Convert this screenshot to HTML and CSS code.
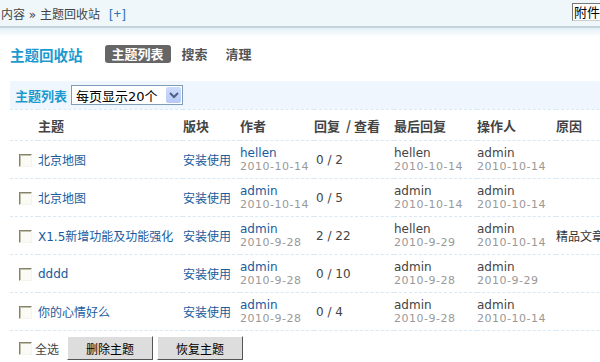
FILE: index.html
```html
<!DOCTYPE html>
<html lang="zh-CN">
<head>
  <meta charset="UTF-8">
  <title>主题回收站</title>
  <link rel="stylesheet" href="styles.css">
</head>
<body>
  <div class="topbar">
    <span class="crumb">内容 &raquo; 主题回收站</span>
    <a class="add" href="#">[+]</a>
    <button class="attach">附件</button>
  </div>
  <div class="shade"></div>

  <div class="titlebar">
    <h2>主题回收站</h2>
    <a class="tab active" href="#">主题列表</a>
    <a class="tab" href="#">搜索</a>
    <a class="tab" href="#">清理</a>
  </div>

  <div class="main">
    <div class="filter">
      <span class="filter-title">主题列表</span>
      <div class="select">
        <span class="select-text">每页显示20个</span>
        <span class="select-arrow">
          <svg width="14" height="14" viewBox="0 0 14 14"><path d="M3 5 L7 9 L11 5" fill="none" stroke="#4d6185" stroke-width="2"/></svg>
        </span>
      </div>
    </div>

    <table class="list">
      <colgroup>
        <col class="c-check"><col class="c-subject"><col class="c-forum"><col class="c-author">
        <col class="c-reply"><col class="c-last"><col class="c-op"><col class="c-reason">
      </colgroup>
      <thead>
        <tr>
          <th></th>
          <th>主题</th>
          <th>版块</th>
          <th>作者</th>
          <th>回复 &nbsp;/ 查看</th>
          <th>最后回复</th>
          <th>操作人</th>
          <th>原因</th>
        </tr>
      </thead>
      <tbody>
        <tr>
          <td><span class="check"></span></td>
          <td><a href="#">北京地图</a></td>
          <td><a href="#">安装使用</a></td>
          <td><a href="#">hellen</a><em>2010-10-14</em></td>
          <td class="num">0 / 2</td>
          <td>hellen<em>2010-10-14</em></td>
          <td>admin<em>2010-10-14</em></td>
          <td></td>
        </tr>
        <tr>
          <td><span class="check"></span></td>
          <td><a href="#">北京地图</a></td>
          <td><a href="#">安装使用</a></td>
          <td><a href="#">admin</a><em>2010-10-14</em></td>
          <td class="num">0 / 5</td>
          <td>admin<em>2010-10-14</em></td>
          <td>admin<em>2010-10-14</em></td>
          <td></td>
        </tr>
        <tr>
          <td><span class="check"></span></td>
          <td><a href="#">X1.5新增功能及功能强化</a></td>
          <td><a href="#">安装使用</a></td>
          <td><a href="#">admin</a><em>2010-9-28</em></td>
          <td class="num">2 / 22</td>
          <td>hellen<em>2010-9-29</em></td>
          <td>admin<em>2010-10-14</em></td>
          <td class="reason">精品文章</td>
        </tr>
        <tr>
          <td><span class="check"></span></td>
          <td><a href="#">dddd</a></td>
          <td><a href="#">安装使用</a></td>
          <td><a href="#">admin</a><em>2010-9-28</em></td>
          <td class="num">0 / 10</td>
          <td>admin<em>2010-9-28</em></td>
          <td>admin<em>2010-9-29</em></td>
          <td></td>
        </tr>
        <tr>
          <td><span class="check"></span></td>
          <td><a href="#">你的心情好么</a></td>
          <td><a href="#">安装使用</a></td>
          <td><a href="#">admin</a><em>2010-9-28</em></td>
          <td class="num">0 / 4</td>
          <td>admin<em>2010-9-28</em></td>
          <td>admin<em>2010-10-14</em></td>
          <td></td>
        </tr>
      </tbody>
    </table>

    <div class="footer">
      <span class="check"></span>
      <span class="all">全选</span>
      <button class="btn">删除主题</button>
      <button class="btn">恢复主题</button>
    </div>
  </div>
</body>
</html>
```

FILE: styles.css
```css
body {
  margin: 0;
  padding: 0;
  font-family: "DejaVu Sans", "Noto Sans CJK SC", sans-serif;
  font-size: 12px;
  color: #333;
  overflow: hidden;
  background: #fff;
}
a {
  color: #1a5b9c;
  text-decoration: none;
}
.topbar {
  height: 26px;
  background: #f0f7fb;
  border-bottom: 2px solid #c3d3da;
  display: flex;
  align-items: center;
  padding-left: 1px;
  position: relative;
}
.crumb {
  color: #444;
}
.add {
  margin-left: 9px;
  color: #2b6fb6;
  font-family: "Liberation Sans", sans-serif;
  font-size: 13px;
  letter-spacing: 1px;
}
.attach {
  position: absolute;
  right: 0;
  top: 3px;
  width: 28px;
  height: 18px;
  padding: 0 0 0 1px;
  font-family: "Noto Sans CJK SC", sans-serif;
  font-size: 13px;
  line-height: 14px;
  text-align: left;
  color: #000;
  background: #fff;
  border: 1px solid #777;
  border-right: none;
  border-bottom-color: #ccc;
}
.shade {
  height: 9px;
  background: linear-gradient(#e4f0f7, #fff);
}
.titlebar {
  display: flex;
  align-items: center;
  height: 18px;
  margin: 8px 0 0 10px;
}
.titlebar h2 {
  margin: 0 22px 0 0;
  font-size: 14.5px;
  color: #1b9ad0;
  font-family: "Noto Sans CJK SC", sans-serif;
}
.tab {
  font-family: "Noto Sans CJK SC", sans-serif;
  font-weight: bold;
  font-size: 13px;
  color: #555;
  padding: 0 7px;
  height: 18px;
  line-height: 18px;
  margin-right: 4px;
  border-radius: 3px;
}
.tab.active {
  background: #666;
  color: #fff;
}
.main {
  margin: 18px 0 0 10px;
}
.filter {
  height: 28px;
  background: #eff6fd;
  display: flex;
  align-items: center;
  padding-left: 5px;
}
.filter-title {
  font-family: "Noto Sans CJK SC", sans-serif;
  font-weight: bold;
  font-size: 13px;
  color: #1b9ad0;
  margin-right: 4px;
}
.select {
  width: 110px;
  height: 18px;
  border: 1px solid #7f9db9;
  background: #fff;
  display: flex;
  align-items: center;
  justify-content: space-between;
}
.select-text {
  padding-left: 4px;
  font-size: 13px;
  color: #000;
}
.select-arrow {
  width: 15px;
  height: 16px;
  margin-right: 1px;
  background: linear-gradient(#cfdcfb, #b7c9f7);
  border-radius: 2px;
  display: flex;
  align-items: center;
  justify-content: center;
}
.list {
  width: 620px;
  table-layout: fixed;
  border-collapse: collapse;
  border-top: 1px dashed #d7e9f7;
}
.c-check { width: 28px; }
.c-subject { width: 145px; }
.c-forum { width: 57px; }
.c-author { width: 74px; }
.c-reply { width: 80px; }
.c-last { width: 83px; }
.c-op { width: 79px; }
.c-reason { width: 94px; }
th {
  height: 30px;
  padding: 0;
  text-align: left;
  font-family: "Noto Sans CJK SC", sans-serif;
  font-weight: bold;
  font-size: 13px;
  color: #444;
  border-bottom: 1px dashed #d7e9f7;
}
td {
  height: 37px;
  padding: 0;
  border-bottom: 1px dashed #d7e9f7;
  white-space: nowrap;
  overflow: hidden;
  color: #444;
}
td a {
  display: block;
}
td em {
  display: block;
  font-style: normal;
  font-size: 11px;
  color: #999;
  letter-spacing: 0.5px;
  line-height: 13px;
}
.num {
  padding-left: 2px;
}
.reason {
  font-family: "Noto Sans CJK SC", sans-serif;
  color: #333;
}
.check {
  display: inline-block;
  width: 11px;
  height: 11px;
  margin-left: 9px;
  vertical-align: middle;
  background: #fbfbf6;
  border: 1px solid;
  border-color: #85826f #f5f4ec #f5f4ec #85826f;
  box-shadow: inset 1px 1px 0 #c2bfad;
}
.footer {
  display: flex;
  align-items: center;
  height: 34px;
}
.footer .check {
  margin-right: 3px;
}
.all {
  font-family: "Noto Sans CJK SC", sans-serif;
  color: #444;
  margin-right: 8px;
}
.btn {
  width: 86px;
  height: 24px;
  margin-right: 4px;
  padding: 0;
  font-family: "Noto Sans CJK SC", sans-serif;
  font-size: 12px;
  color: #000;
  background: #ddd;
  border: 1px solid;
  border-color: #fff #555 #555 #fff;
}
```
